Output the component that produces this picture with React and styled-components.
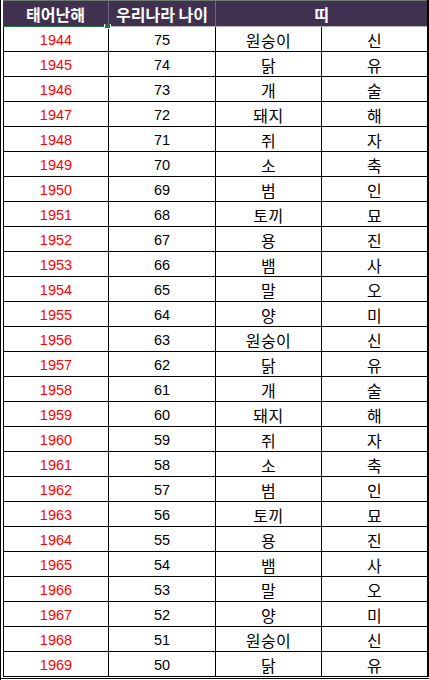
import React from 'react'
import styled, { createGlobalStyle } from 'styled-components'

const GlobalStyle = createGlobalStyle`
    html, body {
        margin: 0;
        padding: 0;
        background: #fff;
    }
    body {
        font-family: "Liberation Sans", "Noto Sans CJK KR", sans-serif;
    }
`

const Sheet = styled.div`
    width: 429px;
    height: 680px;
    overflow: hidden;
    border-left: 1px solid #000;
    padding-left: 2px;
    box-sizing: border-box;
`

const Table = styled.div`
    display: flex;
    flex-direction: column;
    border-right: 2px solid #000;
    width: 426px;
    box-sizing: border-box;
`

const HeaderRow = styled.div`
    display: grid;
    grid-template-columns: 106px 107px 211px;
    border-top: 1px solid #6f7a70;
`

const HeaderCell = styled.div`
    position: relative;
    height: 26px;
    box-sizing: border-box;
    background: #403151;
    color: #fff;
    font-family: "Noto Sans CJK KR", sans-serif;
    font-weight: 700;
    font-size: 16px;
    display: flex;
    align-items: center;
    justify-content: center;
    border-right: ${p => p.$last ? 'none' : '1px solid #6e6380'};
    border-bottom: 1px solid ${p => p.$selected ? '#217346' : '#b4b4b4'};
`

const Handle = styled.span`
    position: absolute;
    right: -3px;
    bottom: -3px;
    width: 5px;
    height: 4px;
    background: #217346;
    border: 1px solid #fff;
    border-top: none;
    z-index: 2;
`

const Row = styled.div`
    display: grid;
    grid-template-columns: 106px 107px 106px 105px;
    height: 25px;
    box-sizing: border-box;
    border-bottom: 1px solid #000;
`

const Cell = styled.div`
    box-sizing: border-box;
    display: flex;
    align-items: center;
    justify-content: center;
    font-size: ${p => p.$hangul ? '16px' : '14.5px'};
    letter-spacing: ${p => p.$hangul ? '0.5px' : '0'};
    font-family: ${p => p.$hangul ? '"Noto Sans CJK KR", sans-serif' : '"Liberation Sans", sans-serif'};
    color: ${p => p.$red ? '#ff0000' : '#000'};
    border-left: ${p => p.$first ? '1px solid #000' : 'none'};
    border-right: ${p => p.$last ? 'none' : '1px solid #000'};
    padding-top: 1px;
`

const BottomRule = styled.div`
    margin-top: 1px;
    height: 1px;
    background: #000;
    margin-left: -3px;
    width: 429px;
`

const animals = [
    ['원숭이', '신'],
    ['닭', '유'],
    ['개', '술'],
    ['돼지', '해'],
    ['쥐', '자'],
    ['소', '축'],
    ['범', '인'],
    ['토끼', '묘'],
    ['용', '진'],
    ['뱀', '사'],
    ['말', '오'],
    ['양', '미'],
]

const rows = []
for (let year = 1944; year <= 1969; year++) {
    const a = animals[(year - 1944) % 12]
    rows.push({ year, age: 2019 - year, name: a[0], ji: a[1] })
}

const App = () => {
    return (
        <>
            <GlobalStyle />
            <Sheet>
                <Table>
                    <HeaderRow>
                        <HeaderCell $selected>
                            태어난해
                            <Handle />
                        </HeaderCell>
                        <HeaderCell>우리나라 나이</HeaderCell>
                        <HeaderCell $last>띠</HeaderCell>
                    </HeaderRow>
                    {rows.map(r => (
                        <Row key={r.year}>
                            <Cell $first $red>{r.year}</Cell>
                            <Cell>{r.age}</Cell>
                            <Cell $hangul>{r.name}</Cell>
                            <Cell $hangul $last>{r.ji}</Cell>
                        </Row>
                    ))}
                </Table>
                <BottomRule />
            </Sheet>
        </>
    )
}

export default App
